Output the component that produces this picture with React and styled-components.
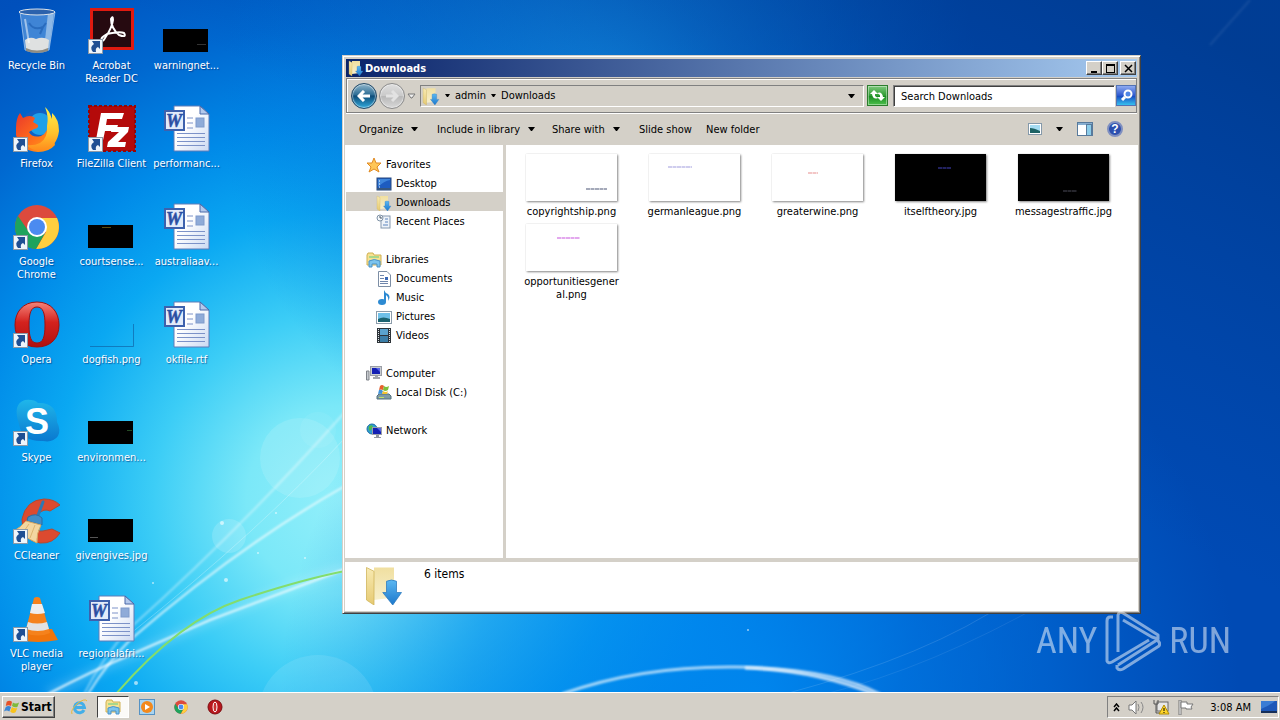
import React from "react";
import styled, { createGlobalStyle } from "styled-components";

const desktopItems = [
  { label: "Recycle Bin", icon: "bin" },
  { label: "Firefox", icon: "firefox", shortcut: true },
  { label: "Google Chrome", icon: "chrome", shortcut: true },
  { label: "Opera", icon: "opera", shortcut: true },
  { label: "Skype", icon: "skype", shortcut: true },
  { label: "CCleaner", icon: "ccleaner", shortcut: true },
  { label: "VLC media player", icon: "vlc", shortcut: true },
  { label: "Acrobat Reader DC", icon: "acrobat", shortcut: true },
  { label: "FileZilla Client", icon: "filezilla", shortcut: true },
  { label: "courtsense...", icon: "black", mark: [15, 24, 9, "#5a4a10"] },
  { label: "dogfish.png", icon: "clear" },
  { label: "environmen...", icon: "black", mark: [40, 31, 5, "#244a24"] },
  { label: "givengives.jpg", icon: "black", mark: [3, 40, 8, "#555"] },
  { label: "regionalafri...", icon: "word" },
  { label: "warningnet...", icon: "black", mark: [35, 37, 9, "#333"] },
  { label: "performanc...", icon: "word" },
  { label: "australiaav...", icon: "word" },
  { label: "okfile.rtf", icon: "word" },
];

const places = [
  {
    label: "Favorites",
    icon: "star",
    children: [
      { label: "Desktop", icon: "desktop" },
      { label: "Downloads", icon: "downloads", selected: true },
      { label: "Recent Places", icon: "recent" },
    ],
  },
  {
    label: "Libraries",
    icon: "libraries",
    children: [
      { label: "Documents", icon: "document" },
      { label: "Music", icon: "music" },
      { label: "Pictures", icon: "pictures" },
      { label: "Videos", icon: "videos" },
    ],
  },
  {
    label: "Computer",
    icon: "computer",
    children: [{ label: "Local Disk (C:)", icon: "disk" }],
  },
  { label: "Network", icon: "network", children: [] },
];

const files = [
  { name: "copyrightship.png", mark: [60, 35, 21, "#8d93a8"] },
  { name: "germanleague.png", mark: [19, 13, 24, "#c3c0ea"] },
  { name: "greaterwine.png", mark: [36, 19, 10, "#f0b8b8"] },
  { name: "itselftheory.jpg", dark: true, mark: [43, 14, 13, "#2a2a78"] },
  { name: "messagestraffic.jpg", dark: true, mark: [45, 37, 14, "#303038"] },
  { name: "opportunitiesgeneral.png", mark: [31, 14, 23, "#dc92ea"] },
];

function Wallpaper() {
  return (
    <Backdrop viewBox="0 0 1280 692" preserveAspectRatio="none" aria-hidden="true">
      <defs>
        <radialGradient id="sky" gradientUnits="userSpaceOnUse" cx="340" cy="500" r="720">
          <stop offset="0" stopColor="#92effa" />
          <stop offset=".13" stopColor="#7be8f8" />
          <stop offset=".26" stopColor="#3ccdf6" />
          <stop offset=".4" stopColor="#0aa8f2" />
          <stop offset=".52" stopColor="#008ae8" />
          <stop offset=".66" stopColor="#0068d0" />
          <stop offset=".82" stopColor="#0050bc" />
          <stop offset="1" stopColor="#004ab4" />
        </radialGradient>
        <radialGradient id="skyTop" gradientUnits="userSpaceOnUse" cx="600" cy="100" r="380">
          <stop offset="0" stopColor="#1490e8" stopOpacity=".9" />
          <stop offset=".5" stopColor="#0a7cdc" stopOpacity=".5" />
          <stop offset="1" stopColor="#0070d8" stopOpacity="0" />
        </radialGradient>
        <radialGradient id="skyLow" gradientUnits="userSpaceOnUse" cx="760" cy="700" r="480">
          <stop offset="0" stopColor="#008cf4" stopOpacity=".8" />
          <stop offset=".6" stopColor="#007ae8" stopOpacity=".45" />
          <stop offset="1" stopColor="#0070e0" stopOpacity="0" />
        </radialGradient>
        <linearGradient id="night" x1=".62" y1=".5" x2="1" y2=".1">
          <stop offset="0" stopColor="#003a8c" stopOpacity="0" />
          <stop offset="1" stopColor="#00347f" stopOpacity=".6" />
        </linearGradient>
        <filter id="soft">
          <feGaussianBlur stdDeviation="5" />
        </filter>
        <filter id="haze">
          <feGaussianBlur stdDeviation="1" />
        </filter>
      </defs>
      <rect width="1280" height="692" fill="url(#sky)" />
      <rect width="1280" height="692" fill="url(#skyTop)" />
      <rect width="1280" height="692" fill="url(#skyLow)" />
      <rect width="1280" height="692" fill="url(#night)" />
      <g fill="none" stroke="#fff">
        <path d="M48 694Q130 655 210 620T345 568" strokeWidth="9" strokeOpacity=".2" filter="url(#soft)" />
        <path d="M48 694Q90 672 130 655L210 620Q290 590 345 569" strokeWidth="2" strokeOpacity=".8" filter="url(#haze)" />
        <path d="M88 694Q108 662 130 640Q240 545 345 486" strokeWidth="2" strokeOpacity=".7" filter="url(#haze)" />
        <path d="M84 694Q104 655 130 628Q240 530 345 412" strokeWidth="2" strokeOpacity=".4" filter="url(#haze)" />
        <path d="M130 634Q260 530 345 438" strokeWidth="1" strokeOpacity=".25" />
        <path d="M562 694Q640 666 735 667T880 694" strokeWidth="3" strokeOpacity=".65" filter="url(#haze)" />
        <path d="M745 668Q815 670 874 694" strokeWidth="3" strokeOpacity=".7" filter="url(#haze)" />
        <path d="M785 694Q930 655 1010 600" strokeWidth="1" strokeOpacity=".12" />
        <path d="M825 694Q930 668 1050 600" strokeWidth="1" strokeOpacity=".08" />
        <path d="M1210 45L1250 0" strokeWidth="2" strokeOpacity=".08" filter="url(#haze)" />
      </g>
      <path d="M116 694Q180 620 240 600T345 571" fill="none" stroke="#83dd6c" strokeWidth="2" />
      <g fill="#fff">
        <circle cx="300" cy="458" r="40" fillOpacity=".12" />
        <circle cx="318" cy="430" r="18" fillOpacity=".06" />
        <circle cx="229" cy="536" r="17" fillOpacity=".15" />
        <circle cx="318" cy="715" r="60" fillOpacity=".1" />
      </g>
      <g fill="#fff" fillOpacity=".6">
        <circle cx="222" cy="523" r="2" />
        <circle cx="276" cy="513" r="1" />
        <circle cx="258" cy="553" r="1" />
        <circle cx="226" cy="580" r="2" />
        <circle cx="305" cy="558" r="1" />
        <circle cx="153" cy="583" r="1" />
        <circle cx="136" cy="683" r="2" />
        <circle cx="748" cy="630" r="1" />
      </g>
    </Backdrop>
  );
}

function DesktopArt({ icon, mark }) {
  switch (icon) {
    case "bin":
      return (
        <g>
          <path d="M8 5L13 43Q25 48 37 43L43 5Z" fill="#7db4ea" fillOpacity=".5" stroke="#cfe3f7" strokeOpacity=".6" />
          <path d="M36 6L32 42L37 41L42 6Z" fill="#dcebf8" fillOpacity=".5" />
          <path d="M13 33Q18 29 24 32Q31 29 37 33L36 43Q25 47 14 43Z" fill="#dfe1e1" />
          <path d="M14 41Q25 46 36 41L36 44Q25 48 14 44Z" fill="#8f8c83" />
          <path d="M13 12L17 36" stroke="#fff" strokeOpacity=".5" strokeWidth="2" />
          <path d="M17 16Q22 24 31 20L28 27M34 16L31 20" stroke="#2465b8" strokeOpacity=".8" strokeWidth="2" fill="none" />
          <ellipse cx="25" cy="5" rx="18" ry="3" fill="#2c62ac" stroke="#dfe5ea" />
        </g>
      );
    case "firefox":
      return (
        <g>
          <circle cx="26" cy="24" r="19" fill="#1260c4" />
          <circle cx="28" cy="19" r="11" fill="#1fa0ea" />
          <path d="M4 23Q4 13 8 8L11 13Q18 9 23 13L21 17L26 20Q27 23 22 24L17 27Q20 33 29 31Q33 29 35 25Q42 32 43 40Q37 47 26 47Q8 46 4 30Z" fill="url(#foxBody)" />
          <path d="M33 2Q37 12 35 21Q36 33 28 38Q22 41 14 40Q22 47 31 46Q45 42 47 26Q47 14 40 8L40 14Q37 5 33 2Z" fill="url(#foxTail)" />
        </g>
      );
    case "chrome":
      return (
        <g>
          <circle cx="25" cy="24" r="22" fill="#dc4a3d" />
          <path d="M25 15H45A22 22 0 0 1 24 46L34 29Z" fill="#ffcf3f" />
          <path d="M6 13A22 22 0 0 0 24 46L33 30L17 29Z" fill="#1ea35d" />
          <circle cx="25" cy="24" r="10" fill="#fff" />
          <circle cx="25" cy="24" r="8" fill="#4b8bf0" />
        </g>
      );
    case "opera":
      return (
        <path d="M25 1C11 1 3 11 3 24S11 46 25 46S47 37 47 24S39 1 25 1ZM25 6C31 6 33 12 33 24S31 42 25 42S17 36 17 24S19 6 25 6Z" fill="url(#operaRed)" stroke="#a01010" fillRule="evenodd" />
      );
    case "skype":
      return (
        <g>
          <path d="M13 1Q22 0 26 4Q45 3 45 23Q49 31 46 37Q41 44 31 42Q10 43 7 25Q0 5 13 1Z" fill="url(#skypeBlue)" />
          <text x="25" y="35" textAnchor="middle" fontFamily="Liberation Sans" fontWeight="bold" fontSize="36" fill="#fff">S</text>
        </g>
      );
    case "ccleaner":
      return (
        <g>
          <path d="M48 8L38 14Q32 11 26 17T23 29Q25 35 31 34L40 32L48 36Q41 47 28 46Q9 43 10 22Q14 3 32 2Q42 2 48 8Z" fill="#dc4a2f" stroke="#b5492f" />
          <path d="M31 5L25 21" stroke="#2f78b3" strokeWidth="3" strokeLinecap="round" />
          <path d="M16 20Q24 15 30 21L30 28L15 24Z" fill="#3f8dc8" stroke="#2a6ca3" />
          <path d="M14 24L29 28Q24 37 25 46L2 34Q9 30 14 24Z" fill="#f3d6a0" stroke="#d9aa64" />
          <path d="M17 27L10 37M23 28L18 41" stroke="#ddb470" />
        </g>
      );
    case "vlc":
      return (
        <g>
          <path d="M12 34H40L46 45Q25 49 8 45Z" fill="#f0750c" />
          <path d="M22 3Q25 1 28 3L38 38Q26 43 13 38Z" fill="#f5821c" />
          <path d="M20 9H30L33 18Q25 20 18 18Z" fill="#eee" />
          <path d="M16 27Q25 30 35 27L37 34Q26 38 14 34Z" fill="#e2e2e2" />
        </g>
      );
    case "acrobat":
      return (
        <g>
          <rect x="3" y="1" width="44" height="42" fill="#e01a10" />
          <rect x="6" y="4" width="38" height="36" fill="#260a10" />
          <path d="M15 33Q13 31 20 27Q33 24 37 26Q40 31 32 28Q24 21 24 12Q26 8 26 13Q25 21 18 31Q16 35 15 33Z" fill="none" stroke="#fff" strokeWidth="2" />
        </g>
      );
    case "filezilla":
      return (
        <g>
          <rect x="2" y="1" width="46" height="45" fill="#b40a0a" stroke="#960505" strokeDasharray="3 2" strokeWidth="2" />
          <path d="M14 8H37L35 14H20L19 20H31L29 26H18L15 40H8Z" fill="#fff" />
          <path d="M25 22H42L41 27L31 37H39L38 42H20L21 37L32 27H24Z" fill="#fff" />
        </g>
      );
    case "word":
      return (
        <g>
          <path d="M12 1H38L47 9V46H12Z" fill="url(#paper)" stroke="#5f7cb8" />
          <path d="M38 1V9H47Z" fill="#b4c9ec" stroke="#4a69a8" />
          <path d="M25 13H31M25 18H31M25 23H31M15 28.500H43M15 32.500H43M15 36.500H43M15 40.500H43" stroke="#7c92c8" />
          <rect x="34" y="13" width="8" height="9" fill="#8fabd8" stroke="#7f9acb" />
          <rect x="3" y="6" width="19" height="19" fill="#e2ebfa" stroke="#3d61ad" strokeWidth="2" />
          <text x="12" y="22" textAnchor="middle" fontFamily="Liberation Serif" fontStyle="italic" fontWeight="bold" fontSize="18" fill="#2b4fa3" stroke="#2b4fa3" strokeWidth=".5">W</text>
        </g>
      );
    case "clear":
      return <path d="M3 45.500H46.500V23" fill="none" stroke="#0f65a8" strokeOpacity=".7" />;
    default:
      return (
        <g>
          <rect x="1" y="22" width="45" height="23" fill="#000" />
          <rect x={mark[0]} y={mark[1]} width={mark[2]} height="1" fill={mark[3]} />
        </g>
      );
  }
}

function DesktopIcon({ item }) {
  return (
    <Shortcut type="button">
      <svg width="50" height="48" viewBox="0 0 50 48" aria-hidden="true">
        <DesktopArt icon={item.icon} mark={item.mark} />
        {item.shortcut && (
          <g>
            <rect x="1.500" y="32.500" width="14" height="14" fill="#eef5fb" stroke="#8d9aa8" />
            <path d="M6 45Q2 40 7 37L5 34H13V42L11 40Q8 41 9 45Z" fill="#1f4f93" />
          </g>
        )}
      </svg>
      <ShortcutLabel>{item.label}</ShortcutLabel>
    </Shortcut>
  );
}

function FolderArt({ size }) {
  return (
    <svg width={size} height={size} viewBox="0 0 16 16" aria-hidden="true">
      <path d="M4 1H12V13L4 14Z" fill="url(#folderBack)" />
      <path d="M1 1L4 2.500V16L1 14Z" fill="url(#folderFront)" stroke="#cdb255" strokeWidth=".3" />
      <path d="M9 6.500Q11 5.500 13 6.500V11H15L11.500 16L7.500 11H9Z" fill="url(#arrowBlue)" stroke="#2a78bd" strokeWidth=".3" />
    </svg>
  );
}

function LibraryArt() {
  return (
    <svg width="16" height="16" viewBox="0 0 16 16" aria-hidden="true">
      <path d="M1 3L2 1H7L8 3H15V13H1Z" fill="#f6e291" stroke="#d0b052" />
      <path d="M3 4H13V6H3Z" fill="#a9d88a" />
      <path d="M3 15V9Q8 6 14 9V15H11V12H6V15Z" fill="#7cc4ee" stroke="#4a93c9" />
    </svg>
  );
}

function SmallArt({ icon }) {
  if (icon === "downloads") return <FolderArt size={16} />;
  if (icon === "libraries") return <LibraryArt />;
  return (
    <svg width="16" height="16" viewBox="0 0 16 16" aria-hidden="true">
      {icon === "star" && (
        <path d="M8 1L10 6L15 6L11 10L13 15L8 12L3 15L5 10L1 6L6 6Z" fill="#ffc658" stroke="#e08a24" />
      )}
      {icon === "desktop" && (
        <g>
          <rect x="1" y="2" width="14" height="12" fill="#1e5cc0" stroke="#27497f" />
          <path d="M2 11Q8 5 14 4V3H2Z" fill="#3f86dc" />
          <path d="M1 13H15" stroke="#37577f" strokeWidth="2" />
          <path d="M3 5H4M3 8H4M3 11H4" stroke="#fff" />
        </g>
      )}
      {icon === "recent" && (
        <g>
          <rect x="5" y="2" width="9" height="12" fill="#eef3f9" stroke="#8598ae" />
          <path d="M9 5H12M9 8H12M7 11H12" stroke="#5a83bd" />
          <circle cx="4" cy="4" r="3" fill="#f6f9fc" stroke="#7f92a6" />
          <path d="M4 2V4H6" fill="none" stroke="#456" />
        </g>
      )}
      {icon === "document" && (
        <g>
          <path d="M2.500 .5H11L14.500 4V15.500H2.500Z" fill="#fff" stroke="#7d8ea5" />
          <path d="M4 4.500H8M4 7.500H8M4 10.500H12M4 12.500H12" stroke="#6f86ac" />
          <rect x="9" y="6" width="3" height="3" fill="#3b69b6" />
        </g>
      )}
      {icon === "music" && (
        <g fill="#2d8ad2">
          <ellipse cx="6" cy="12" rx="4" ry="3" />
          <path d="M8 12V0Q9 3 12 4Q15 7 12 11Q13 7 10 5V12Z" />
        </g>
      )}
      {icon === "pictures" && (
        <g>
          <rect x=".5" y="2.500" width="15" height="12" fill="#fff" stroke="#8d9dab" />
          <rect x="2" y="4" width="12" height="9" fill="#6fc0e8" />
          <path d="M2 10Q7 7 14 10V13H2Z" fill="#1c6370" />
        </g>
      )}
      {icon === "videos" && (
        <g>
          <rect x="1" y="0" width="14" height="15" fill="#2d3338" />
          <rect x="4" y="1" width="8" height="6" fill="#5aa3cf" />
          <rect x="4" y="8" width="8" height="6" fill="#3b7ea8" />
          <path d="M2.500 1V15M13.500 1V15" stroke="#dde3e8" strokeDasharray="1 1" />
        </g>
      )}
      {icon === "computer" && (
        <g>
          <rect x="4.500" y=".5" width="11" height="9" fill="#c8ccd2" stroke="#9a9ea6" />
          <rect x="6" y="2" width="8" height="6" fill="#1420b4" />
          <path d="M10 2H14V6Z" fill="#5b68e6" />
          <path d="M9 10H12V11H14V13H7V11H9Z" fill="#a3a7ae" />
          <path d="M.5 5H3V14H.5Z" fill="#c7cbd0" stroke="#7e8288" />
        </g>
      )}
      {icon === "disk" && (
        <g>
          <path d="M3 9H13L15 11V14H1V11Z" fill="#7f9aa6" stroke="#52707c" />
          <path d="M3 12.500H8" stroke="#bfe06a" />
          <path d="M4 1Q6 -1 8 1L7 5Q5 4 3 5Z" fill="#e8602c" />
          <path d="M8 1Q10 3 13 1L12 5Q9 7 7 5Z" fill="#7cbf3c" />
          <path d="M3 5Q5 4 7 6L6 9Q4 8 2 9Z" fill="#3f93dc" />
          <path d="M7 6Q10 8 12 6L11 9H6Z" fill="#f5c22e" />
        </g>
      )}
      {icon === "network" && (
        <g>
          <circle cx="6" cy="6" r="5" fill="#2d9fd4" stroke="#1c6ca3" />
          <path d="M3 3Q7 1 7 4L4 8Q2 7 3 3Z" fill="#52b848" />
          <rect x="6.500" y="4.500" width="9" height="7" fill="#1420b4" stroke="#9a9fa8" />
          <path d="M11 5H15V9Z" fill="#5b68e6" />
          <path d="M10 12H13V14H15V15H8V14H10Z" fill="#9296a0" />
        </g>
      )}
    </svg>
  );
}

function WindowsFlag() {
  return (
    <svg width="16" height="16" viewBox="0 0 18 16" aria-hidden="true">
      <path d="M3 2Q6 0 9 2L8 7Q5 5 2 7Z" fill="#e65127" />
      <path d="M10 3Q13 5 17 3L15 8Q12 9 9 7Z" fill="#7fba3a" />
      <path d="M2 8Q5 6 8 8L6 13Q3 11 0 13Z" fill="#3a86d6" />
      <path d="M9 8Q12 10 15 9L13 14Q10 16 7 13Z" fill="#f8c31c" />
    </svg>
  );
}

function ChromeArt() {
  return (
    <svg width="14" height="14" viewBox="2 1 46 46" aria-hidden="true">
      <DesktopArt icon="chrome" />
    </svg>
  );
}

function IeArt() {
  return (
    <svg width="18" height="18" viewBox="0 0 18 18" aria-hidden="true">
      <path d="M14 12A5 5 0 1 1 14.500 9.500H6" fill="none" stroke="#43aee8" strokeWidth="3" />
      <path d="M2 16Q0 12 8 5Q15 0 17 3" fill="none" stroke="#e8b83a" />
    </svg>
  );
}

function PlayerArt() {
  return (
    <svg width="16" height="16" viewBox="0 0 16 16" aria-hidden="true">
      <rect x=".5" y=".5" width="15" height="15" fill="#a9d4f0" stroke="#5592c4" />
      <circle cx="8" cy="8" r="6" fill="#f3891c" />
      <path d="M6 5L11 8L6 11Z" fill="#fff" />
    </svg>
  );
}

function OperaArt() {
  return (
    <svg width="16" height="16" viewBox="0 0 16 16" aria-hidden="true">
      <circle cx="8" cy="8" r="7" fill="#b8161c" stroke="#7c0c10" />
      <ellipse cx="8" cy="8" rx="2" ry="5" fill="#c8302f" stroke="#fff" />
    </svg>
  );
}

function Arrow() {
  return (
    <svg width="7" height="4" viewBox="0 0 7 4" aria-hidden="true">
      <path d="M0 0H7L4 4H3Z" fill="#000" />
    </svg>
  );
}

function SmallArrow() {
  return (
    <svg width="5" height="3" viewBox="0 0 5 3" aria-hidden="true">
      <path d="M0 0H5L3 3H2Z" fill="#000" />
    </svg>
  );
}

function Explorer() {
  return (
    <Frame>
      <TitleBar>
        <FolderArt size={16} />
        <Title>Downloads</Title>
        <CaptionButton type="button" aria-label="Minimize">
          <svg width="9" height="9" viewBox="0 0 9 9"><path d="M1 7H7V9H1Z" /></svg>
        </CaptionButton>
        <CaptionButton type="button" aria-label="Maximize">
          <svg width="9" height="9" viewBox="0 0 9 9"><path d="M0 0H9V9H0ZM1 2V8H8V2Z" fillRule="evenodd" /></svg>
        </CaptionButton>
        <CaptionButton type="button" aria-label="Close" $apart>
          <svg width="9" height="9" viewBox="0 0 9 9"><path d="M1 1L8 8M8 1L1 8" stroke="#000" strokeWidth="1.500" /></svg>
        </CaptionButton>
      </TitleBar>

      <AddressRow>
        <RoundButton type="button" aria-label="Back" $active>
          <svg width="14" height="12" viewBox="0 0 14 12"><path d="M13 6H3M7 1L2 6L7 11" fill="none" stroke="#fff" strokeWidth="3" /></svg>
        </RoundButton>
        <RoundButton type="button" aria-label="Forward">
          <svg width="14" height="12" viewBox="0 0 14 12"><path d="M1 6H11M7 1L12 6L7 11" fill="none" stroke="#e2e2e2" strokeWidth="3" /></svg>
        </RoundButton>
        <HistoryButton type="button" aria-label="Recent pages">
          <svg width="9" height="6" viewBox="0 0 9 6"><path d="M1 1H8L5 5H4Z" fill="#eee" stroke="#777" /></svg>
        </HistoryButton>
        <AddressBox aria-label="Address">
          <FolderArt size={18} />
          <SmallArrow />
          <Crumb href="#admin">admin</Crumb>
          <SmallArrow />
          <Crumb href="#downloads">Downloads</Crumb>
          <Spacer />
          <Arrow />
        </AddressBox>
        <RefreshButton type="button" aria-label="Refresh">
          <svg width="17" height="17" viewBox="0 0 17 17">
            <path d="M5 3L9 7H6V9L9 11Q4 13 3 7H1Z" fill="#fff" />
            <path d="M12 14L8 10H11V8L8 6Q13 4 14 10H16Z" fill="#fff" />
          </svg>
        </RefreshButton>
        <SearchInput type="text" aria-label="Search" placeholder="Search Downloads" />
        <SearchButton type="button" aria-label="Search">
          <svg width="17" height="17" viewBox="0 0 17 17">
            <circle cx="10" cy="7" r="3.500" fill="#4f86e6" stroke="#fff" strokeWidth="2" />
            <path d="M7 10L4 13" stroke="#fff" strokeWidth="3" />
          </svg>
        </SearchButton>
      </AddressRow>

      <Toolbar>
        <ToolButton type="button" $width={78}>Organize <Arrow /></ToolButton>
        <ToolButton type="button" $width={115}>Include in library <Arrow /></ToolButton>
        <ToolButton type="button" $width={87}>Share with <Arrow /></ToolButton>
        <ToolButton type="button" $width={67}>Slide show</ToolButton>
        <ToolButton type="button">New folder</ToolButton>
        <Spacer />
        <ToolTray>
          <IconButton type="button" aria-label="Change your view">
            <svg width="14" height="12" viewBox="0 0 14 12">
              <rect x=".5" y=".5" width="13" height="11" fill="#fff" stroke="#8599aa" />
              <rect x="2" y="2" width="10" height="8" fill="#a5dcf2" />
              <path d="M2 5Q6 5 12 8V10H2Z" fill="#1d6264" />
            </svg>
          </IconButton>
          <IconButton type="button" aria-label="More view options"><Arrow /></IconButton>
          <IconButton type="button" aria-label="Preview pane">
            <svg width="16" height="14" viewBox="0 0 16 14">
              <rect x=".5" y=".5" width="15" height="13" fill="#fff" stroke="#587a9c" />
              <path d="M1 2H15" stroke="#87aed0" strokeWidth="2" />
              <rect x="9.500" y="2.500" width="5" height="11" fill="#8ccdea" stroke="#587a9c" />
            </svg>
          </IconButton>
          <IconButton type="button" aria-label="Help">
            <svg width="16" height="16" viewBox="0 0 16 16">
              <circle cx="8" cy="8" r="7" fill="#2c4fae" stroke="#7f8fc0" strokeWidth="2" />
              <text x="8" y="12" textAnchor="middle" fontFamily="Liberation Sans" fontWeight="bold" fontSize="12" fill="#fff">?</text>
            </svg>
          </IconButton>
        </ToolTray>
      </Toolbar>

      <Panes>
        <PlacesPane aria-label="Places">
          {places.map((group) => (
            <PlaceGroup key={group.label}>
              <PlaceLink href="#place"><SmallArt icon={group.icon} />{group.label}</PlaceLink>
              {group.children.map((child) => (
                <PlaceLink key={child.label} href="#place" $nested $selected={child.selected}>
                  <SmallArt icon={child.icon} />
                  {child.label}
                </PlaceLink>
              ))}
            </PlaceGroup>
          ))}
        </PlacesPane>
        <FilesPane>
          {files.map((file) => (
            <FileButton type="button" key={file.name}>
              <Thumb width="91" height="47" viewBox="0 0 91 47" $dark={file.dark} aria-hidden="true">
                <path d={`M${file.mark[0]} ${file.mark[1]}h${file.mark[2]}`} stroke={file.mark[3]} strokeWidth="2" strokeDasharray="4 .5" strokeOpacity=".8" />
              </Thumb>
              <FileName>{file.name}</FileName>
            </FileButton>
          ))}
        </FilesPane>
      </Panes>

      <DetailsPane>
        <FolderArt size={40} />
        <span>6 items</span>
      </DetailsPane>
    </Frame>
  );
}

function Watermark() {
  return (
    <WatermarkBox aria-hidden="true">
      <span>ANY</span>
      <svg width="56" height="62" viewBox="0 0 56 62">
        <g fill="none" stroke="#fff" strokeWidth="3" strokeLinejoin="round">
          <path d="M8 7H5Q2 7 2 11V51Q3 54 7 52L44 30" />
          <path d="M13 42V5Q14 1 18 3L53 25V29L47 27L18 10" />
          <path d="M12 55V58Q14 61 18 59L54 36Q56 33 52 30L13 55" />
        </g>
      </svg>
      <span>RUN</span>
    </WatermarkBox>
  );
}

function Taskbar() {
  return (
    <Bar>
      <StartButton type="button"><WindowsFlag />Start</StartButton>
      <QuickLaunch>
        <TaskButton type="button" aria-label="Internet Explorer"><IeArt /></TaskButton>
        <TaskButton type="button" aria-label="Windows Explorer" $pressed><LibraryArt /></TaskButton>
        <TaskButton type="button" aria-label="Media Player"><PlayerArt /></TaskButton>
        <TaskButton type="button" aria-label="Google Chrome"><ChromeArt /></TaskButton>
        <TaskButton type="button" aria-label="Opera"><OperaArt /></TaskButton>
      </QuickLaunch>
      <Spacer />
      <Tray>
        <svg width="7" height="9" viewBox="0 0 7 9" aria-hidden="true">
          <path d="M1 4L3.500 1L6 4M1 8L3.500 5L6 8" fill="none" stroke="#000" strokeWidth="1.500" />
        </svg>
        <svg width="17" height="15" viewBox="0 0 17 15" aria-hidden="true">
          <path d="M1 5H4L8 1V14L4 10H1Z" fill="#fff" stroke="#777" />
          <path d="M10 4Q12 7 10 11M13 2Q17 7 13 13" fill="none" stroke="#888" />
        </svg>
        <svg width="17" height="16" viewBox="0 0 17 16" aria-hidden="true">
          <rect x="4" y="3" width="11" height="9" fill="#e8e8e8" stroke="#666" />
          <path d="M1 1V5H5V1M3 5V14H9" fill="none" stroke="#555" />
          <path d="M11 6L16 15H6Z" fill="#ffd52a" stroke="#b28c00" />
          <path d="M11 9V12M11 13V14" stroke="#000" />
        </svg>
        <svg width="16" height="15" viewBox="0 0 16 15" aria-hidden="true">
          <path d="M1 0V15H3V0Z" fill="#fff" stroke="#777" />
          <path d="M3 2H9V4H15L13 7L14 9H8V8H3Z" fill="#fff" stroke="#777" />
        </svg>
        <Clock>3:08 AM</Clock>
        <ShowDesktop type="button" aria-label="Show desktop">
          <svg width="16" height="12" viewBox="0 0 16 12">
            <rect width="16" height="12" fill="#1d58b8" />
            <path d="M0 8Q8 5 14 0H0Z" fill="#3a7cd4" />
            <path d="M0 11H16" stroke="#152e58" strokeWidth="2" />
          </svg>
        </ShowDesktop>
      </Tray>
    </Bar>
  );
}

function SharedGradients() {
  return (
    <HiddenSvg width="0" height="0" aria-hidden="true">
      <defs>
        <linearGradient id="foxBody" x1="0" y1="0" x2="1" y2="1">
          <stop offset="0" stopColor="#e8382c" />
          <stop offset=".5" stopColor="#ff6a1c" />
          <stop offset="1" stopColor="#ffa31a" />
        </linearGradient>
        <linearGradient id="foxTail" x1="0" y1="0" x2="0" y2="1">
          <stop offset="0" stopColor="#fff04a" />
          <stop offset=".6" stopColor="#ffc12c" />
          <stop offset="1" stopColor="#ff8a1c" />
        </linearGradient>
        <linearGradient id="operaRed" x1="0" y1="0" x2="0" y2="1">
          <stop offset="0" stopColor="#f4847a" />
          <stop offset=".45" stopColor="#d4221e" />
          <stop offset="1" stopColor="#b01010" />
        </linearGradient>
        <linearGradient id="skypeBlue" x1="0" y1="0" x2="0" y2="1">
          <stop offset="0" stopColor="#1fb6ea" />
          <stop offset="1" stopColor="#0a78cf" />
        </linearGradient>
        <linearGradient id="paper" x1="0" y1="0" x2="1" y2="1">
          <stop offset=".4" stopColor="#fff" />
          <stop offset="1" stopColor="#cbd9f2" />
        </linearGradient>
        <linearGradient id="folderBack" x1="0" y1="0" x2="0" y2="1">
          <stop offset="0" stopColor="#f0dfa0" />
          <stop offset="1" stopColor="#f7efcb" />
        </linearGradient>
        <linearGradient id="folderFront" x1="0" y1="0" x2="0" y2="1">
          <stop offset="0" stopColor="#f8eab2" />
          <stop offset="1" stopColor="#e6ca72" />
        </linearGradient>
        <linearGradient id="arrowBlue" x1="0" y1="0" x2="0" y2="1">
          <stop offset="0" stopColor="#5cb8f2" />
          <stop offset="1" stopColor="#1c78cc" />
        </linearGradient>
      </defs>
    </HiddenSvg>
  );
}

export default function App() {
  return (
    <Screen>
      <GlobalStyle />
      <SharedGradients />
      <Desktop>
        <Wallpaper />
        <IconGrid>
          {desktopItems.map((item) => (
            <DesktopIcon key={item.label} item={item} />
          ))}
        </IconGrid>
        <Explorer />
        <Watermark />
      </Desktop>
      <Taskbar />
    </Screen>
  );
}

const GlobalStyle = createGlobalStyle`
  * {
    box-sizing: border-box;
  }

  body {
    margin: 0;
    overflow: hidden;
  }

  button, input {
    font: inherit;
    color: inherit;
    margin: 0;
    padding: 0;
    border: none;
    background: none;
  }

  a {
    color: inherit;
    text-decoration: none;
  }

  svg {
    display: block;
    flex: none;
  }
`;

const Screen = styled.div`
  display: flex;
  flex-direction: column;
  height: 100vh;
  font-family: "DejaVu Sans Condensed", "DejaVu Sans", sans-serif;
  font-size: 11px;
  line-height: 13px;
  color: #000;
`;

const HiddenSvg = styled.svg`
  position: absolute;
`;

const Desktop = styled.main`
  position: relative;
  flex: 1;
  min-height: 0;
  overflow: hidden;
  background: #0078dc;
`;

const Backdrop = styled.svg`
  position: absolute;
  inset: 0;
  width: 100%;
  height: 100%;
`;

const IconGrid = styled.div`
  position: relative;
  display: grid;
  grid-template-rows: repeat(7, 98px);
  grid-auto-columns: 75px;
  grid-auto-flow: column;
  justify-content: start;
`;

const Shortcut = styled.button`
  display: flex;
  flex-direction: column;
  align-items: center;
  gap: 4px;
  padding: 7px 2px 0 0;
  color: #fff;
`;

const ShortcutLabel = styled.span`
  max-width: 75px;
  text-align: center;
  text-shadow: 1px 1px 1px rgba(0, 40, 110, 0.6);
`;

const Frame = styled.section`
  position: absolute;
  top: 55px;
  right: 139px;
  bottom: 78px;
  left: 342px;
  display: flex;
  flex-direction: column;
  padding: 2px;
  background: #d4d0c8;
  border: 1px solid;
  border-color: #d4d0c8 #404040 #404040 #d4d0c8;
  box-shadow: inset 1px 1px #fff, inset -1px -1px #808080;
`;

const TitleBar = styled.header`
  display: flex;
  align-items: center;
  height: 18px;
  margin: 1px;
  padding: 0 1px 0 2px;
  color: #fff;
  background: linear-gradient(90deg, #0a246a, #a6caf0);
`;

const Title = styled.h1`
  flex: 1;
  margin: 0 0 0 1px;
  font-size: 11px;
  font-weight: bold;
`;

const CaptionButton = styled.button`
  display: grid;
  place-items: center;
  width: 16px;
  height: 14px;
  margin-left: ${({ $apart }) => ($apart ? "2px" : "0")};
  background: #d4d0c8;
  border: 1px solid;
  border-color: #fff #404040 #404040 #fff;
  box-shadow: inset -1px -1px #808080;
`;

const AddressRow = styled.div`
  display: flex;
  align-items: center;
  height: 35px;
  margin: 0 1px;
  padding: 0 0 0 4px;
  border: 1px solid #808080;
  box-shadow: inset 1px 1px #fff, 0 1px #fff;
`;

const RoundButton = styled.button`
  display: grid;
  place-items: center;
  width: 26px;
  height: 26px;
  margin-right: 2px;
  border-radius: 50%;
  border: 1px solid ${({ $active }) => ($active ? "#234a68" : "#8b8b8b")};
  background: ${({ $active }) =>
    $active
      ? "linear-gradient(#8fb6cc, #2c6c94 45%, #0e4c78 50%, #2fa9dc)"
      : "linear-gradient(#dedede, #c9c9c9 50%, #b8b8b8 52%, #d8d8d8)"};
  box-shadow: inset 0 0 1px 1px rgba(255, 255, 255, 0.5);
`;

const HistoryButton = styled.button`
  width: 9px;
  margin-right: 4px;
`;

const AddressBox = styled.nav`
  display: flex;
  align-items: center;
  gap: 5px;
  flex: 1;
  height: 22px;
  margin-right: 3px;
  padding: 0 8px 0 1px;
  border: 1px solid;
  border-color: #808080 #fff #fff #808080;
`;

const Crumb = styled.a`
  white-space: nowrap;
`;

const Spacer = styled.span`
  flex: 1;
`;

const RefreshButton = styled.button`
  display: grid;
  place-items: center;
  width: 21px;
  height: 21px;
  margin-right: 5px;
  border: 1px solid #2c7d2e;
  background: linear-gradient(#7ec87c, #2f9c34 50%, #188a20 52%, #4cc04c);
  box-shadow: inset 0 0 0 1px rgba(255, 255, 255, 0.4);
`;

const SearchInput = styled.input`
  flex: 0 1 222px;
  min-width: 100px;
  height: 22px;
  margin-right: 1px;
  padding: 2px 7px 0;
  border: 1px solid;
  border-color: #808080 #fff #fff #808080;
  box-shadow: inset 1px 1px #404040;
  background: #fff;

  &::placeholder {
    color: #000;
    opacity: 1;
  }
`;

const SearchButton = styled.button`
  display: grid;
  place-items: center;
  width: 20px;
  height: 21px;
  border: 1px solid #5272b4;
  background: linear-gradient(#8eaaf0, #2d58cf 50%, #1748c2 52%, #35c0ee);
`;

const Toolbar = styled.div`
  display: flex;
  align-items: center;
  height: 32px;
  padding: 0 15px 0 14px;
`;

const ToolButton = styled.button`
  display: flex;
  align-items: center;
  gap: 8px;
  width: ${({ $width }) => ($width ? `${$width}px` : "auto")};
  white-space: nowrap;
`;

const ToolTray = styled.div`
  display: flex;
  align-items: center;
  gap: 14px;
`;

const IconButton = styled.button`
  display: block;
`;

const Panes = styled.div`
  display: flex;
  gap: 3px;
  flex: 1;
  min-height: 0;
`;

const PlacesPane = styled.nav`
  display: flex;
  flex-direction: column;
  gap: 19px;
  flex: none;
  width: 158px;
  padding: 9px 0 0 1px;
  background: #fff;
`;

const PlaceGroup = styled.div`
  display: flex;
  flex-direction: column;
`;

const PlaceLink = styled.a`
  display: flex;
  align-items: center;
  gap: 4px;
  height: 19px;
  padding-top: 2px;
  padding-left: ${({ $nested }) => ($nested ? "30px" : "20px")};
  background: ${({ $selected }) => ($selected ? "#d4d0c8" : "transparent")};
`;

const FilesPane = styled.div`
  display: grid;
  grid-template-columns: repeat(auto-fill, 123px);
  grid-auto-rows: 70px;
  flex: 1;
  padding: 9px 0 0 4px;
  background: #fff;
`;

const FileButton = styled.button`
  display: flex;
  flex-direction: column;
  align-items: center;
  gap: 4px;
`;

const Thumb = styled.svg`
  background: ${({ $dark }) => ($dark ? "#000" : "#fff")};
  box-shadow: 1px 1px 2px #888, 0 0 1px #ddd;
`;

const FileName = styled.span`
  width: 100px;
  text-align: center;
  overflow-wrap: anywhere;
`;

const DetailsPane = styled.footer`
  display: flex;
  gap: 20px;
  height: 49px;
  margin-top: 4px;
  padding: 3px 19px;
  background: #fff;

  span {
    padding-top: 3px;
    font-size: 12px;
  }
`;

const WatermarkBox = styled.div`
  position: absolute;
  right: 49px;
  bottom: 20px;
  display: flex;
  align-items: center;
  gap: 8px;
  font-family: "Roboto Condensed", "Liberation Sans Narrow", "Liberation Sans", sans-serif;
  font-size: 36px;
  line-height: 40px;
  color: #fff;
  opacity: 0.5;
  pointer-events: none;
`;

const Bar = styled.footer`
  display: flex;
  align-items: center;
  flex: none;
  height: 28px;
  padding: 1px 1px 0 2px;
  background: #d4d0c8;
  border-top: 1px solid #fff;
`;

const StartButton = styled.button`
  display: flex;
  align-items: center;
  gap: 1px;
  width: 53px;
  height: 22px;
  padding-left: 1px;
  font-size: 12px;
  font-weight: bold;
  border: 1px solid;
  border-color: #fff #404040 #404040 #fff;
  box-shadow: inset -1px -1px #808080;
`;

const QuickLaunch = styled.div`
  display: flex;
  gap: 2px;
  margin-left: 8px;
`;

const TaskButton = styled.button`
  display: grid;
  place-items: center;
  width: 32px;
  height: 22px;
  border: 1px solid;
  border-color: ${({ $pressed }) => ($pressed ? "#404040 #fff #fff #404040" : "transparent")};
  background: ${({ $pressed }) => ($pressed ? "#fbfaf8" : "transparent")};
`;

const Tray = styled.div`
  display: flex;
  align-items: center;
  gap: 8px;
  height: 22px;
  padding: 0 1px 0 5px;
  border: 1px solid;
  border-color: #808080 #fff #fff #808080;
`;

const Clock = styled.time`
  margin: 0 2px 0 8px;
`;

const ShowDesktop = styled.button`
  display: block;
`;
